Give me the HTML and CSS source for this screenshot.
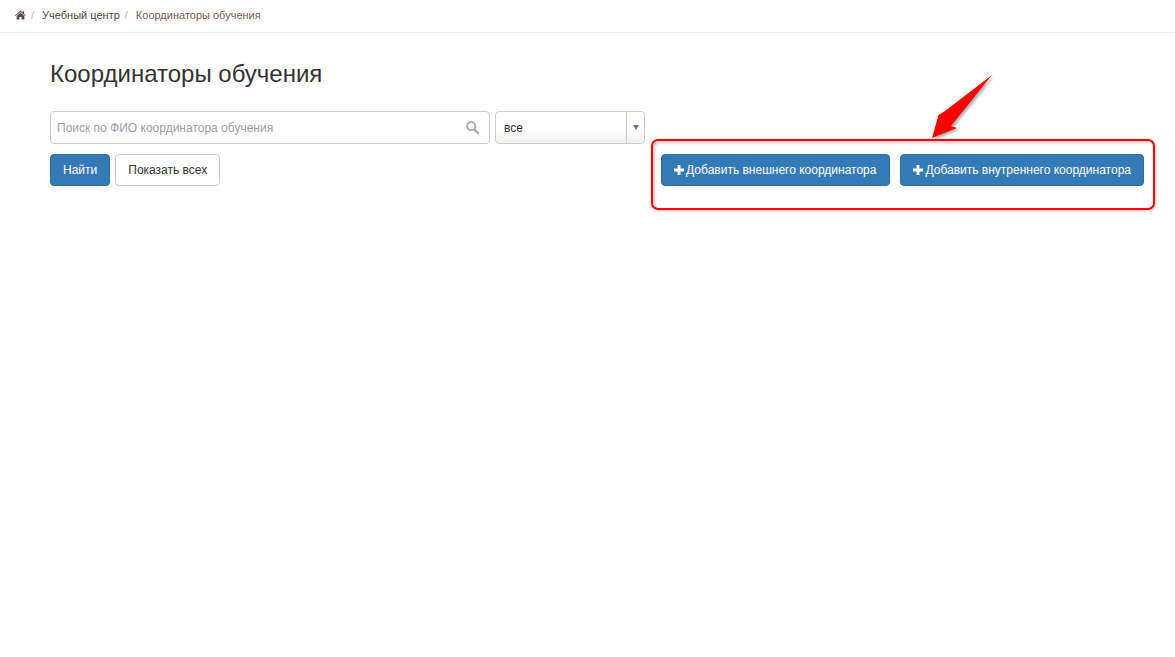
FILE: index.html
```html
<!DOCTYPE html>
<html lang="ru">
<head>
<meta charset="utf-8">
<title>Координаторы обучения</title>
<link rel="stylesheet" href="styles.css">
</head>
<body>
<nav class="crumbs">
  <svg class="home" viewBox="0 0 16 14" aria-hidden="true"><path d="M8 0.6 L11.2 3.4 V1.6 H13.2 V5.1 L16 7.6 L15.1 8.6 L8 2.6 L0.9 8.6 L0 7.6 Z M8 3.9 L13.6 8.6 V13.4 H9.6 V9.8 H6.4 V13.4 H2.4 V8.6 Z"/></svg>
  <span class="sep">/</span>
  <a class="crumb">Учебный центр</a>
  <span class="sep">/</span>
  <span class="crumb current">Координаторы обучения</span>
</nav>
<main class="page">
  <h1 class="title">Координаторы обучения</h1>
  <div class="toolbar">
    <form class="filters">
      <div class="fields">
        <div class="search">
          <span class="placeholder">Поиск по ФИО координатора обучения</span>
          <svg class="loupe" viewBox="0 0 14 14" aria-hidden="true"><circle cx="5.6" cy="5.6" r="4.4" fill="none" stroke-width="2"/><path d="M8.9 8.9 L12.8 12.8" fill="none" stroke-width="2.4" stroke-linecap="round"/></svg>
        </div>
        <div class="select">
          <span class="select-value">все</span>
          <span class="select-arrow"><i class="caret"></i></span>
        </div>
      </div>
      <div class="actions">
        <button type="button" class="btn primary">Найти</button>
        <button type="button" class="btn plain">Показать всех</button>
      </div>
    </form>
    <div class="adders">
      <button type="button" class="btn primary add outer"><svg class="plus" viewBox="0 0 10 10" aria-hidden="true"><path d="M3.6 0 H6.4 V3.6 H10 V6.4 H6.4 V10 H3.6 V6.4 H0 V3.6 H3.6 Z"/></svg>Добавить внешнего координатора</button>
      <button type="button" class="btn primary add"><svg class="plus" viewBox="0 0 10 10" aria-hidden="true"><path d="M3.6 0 H6.4 V3.6 H10 V6.4 H6.4 V10 H3.6 V6.4 H0 V3.6 H3.6 Z"/></svg>Добавить внутреннего координатора</button>
    </div>
  </div>
</main>
<div class="callout"></div>
<svg class="arrow" viewBox="0 0 80 80" aria-hidden="true">
  <defs><filter id="soft" x="-30%" y="-30%" width="160%" height="160%"><feGaussianBlur stdDeviation="1.2"/></filter></defs>
  <polygon points="68,5 21,41 14.5,45 8,68 33,58 27,56" fill="#666" opacity=".5" filter="url(#soft)" transform="translate(2,2)"/>
  <polygon points="68,5 21,41 14.5,45 8,68 33,58 27,56" fill="#ff0000"/>
</svg>
</body>
</html>
```
FILE: styles.css
```css
* { box-sizing: border-box; }
html, body { margin: 0; padding: 0; background: #fff; }
body {
  width: 1175px;
  height: 657px;
  overflow: hidden;
  position: relative;
  font-family: "Liberation Sans", Arial, sans-serif;
  font-size: 12px;
  color: #333;
}
.crumbs {
  height: 33px;
  border-bottom: 1px solid #e7e7e7;
  display: flex;
  align-items: center;
  padding: 0 0 2px 15px;
  font-size: 11px;
  color: #6b4a4a;
}
.home { width: 11px; height: 10px; fill: #5e4347; }
.sep { color: #bbb; margin: 0 8px 0 5px; }
.crumb { color: #4f3f3f; }
.crumb.current { color: #7a5a55; }
.page { padding: 0 31px 0 50px; }
.title {
  margin: 0;
  padding-top: 27px;
  height: 78px;
  font-size: 24px;
  font-weight: 400;
  line-height: 28px;
  color: #333;
}
.toolbar { display: flex; justify-content: space-between; align-items: flex-start; }
.filters { width: 595px; display: flex; flex-direction: column; gap: 10px; }
.fields { display: flex; gap: 5px; }
.search {
  width: 440px;
  height: 33px;
  border: 1px solid #ccc;
  border-radius: 4px;
  display: flex;
  align-items: center;
  justify-content: space-between;
  padding: 0 10px 0 6px;
  color: #999;
}
.placeholder { color: #9aa0a6; }
.loupe { width: 13px; height: 13px; stroke: #a9a9a9; }
.select {
  width: 150px;
  height: 33px;
  border: 1px solid #ccc;
  border-radius: 4px;
  display: flex;
  background: linear-gradient(#fff 55%, #f0f0f0);
}
.select-value { flex: 1; padding: 1px 8px 0; line-height: 31px; color: #333; }
.select-arrow { width: 18px; border-left: 1px solid #ccc; display: flex; align-items: center; justify-content: center; }
.caret { width: 0; height: 0; border-left: 3px solid transparent; border-right: 3px solid transparent; border-top: 5px solid #7a6a9a; }
.actions { display: flex; gap: 5px; }
.btn {
  height: 32px;
  border-radius: 4px;
  font-family: inherit;
  font-size: 12px;
  padding: 0 12px;
  display: inline-flex;
  align-items: center;
}
.primary { background: #337ab7; border: 1px solid #2e6da4; color: #fff; }
.plain { background: #fff; border: 1px solid #ccc; color: #333; }
.adders { display: flex; gap: 10px; margin-top: 43px; }
.add { padding: 0 12px; }
.add.outer { padding-right: 13px; }
.plus { width: 10px; height: 10px; fill: #fff; margin-right: 2px; }
.callout {
  position: absolute;
  left: 651px;
  top: 139px;
  width: 504px;
  height: 71px;
  border: 2px solid #f00;
  border-radius: 7px;
  box-shadow: 1px 1px 3px rgba(0,0,0,.25), inset 2px 2px 3px rgba(0,0,0,.2);
}
.arrow { position: absolute; left: 924px; top: 70px; width: 80px; height: 80px; }
```
